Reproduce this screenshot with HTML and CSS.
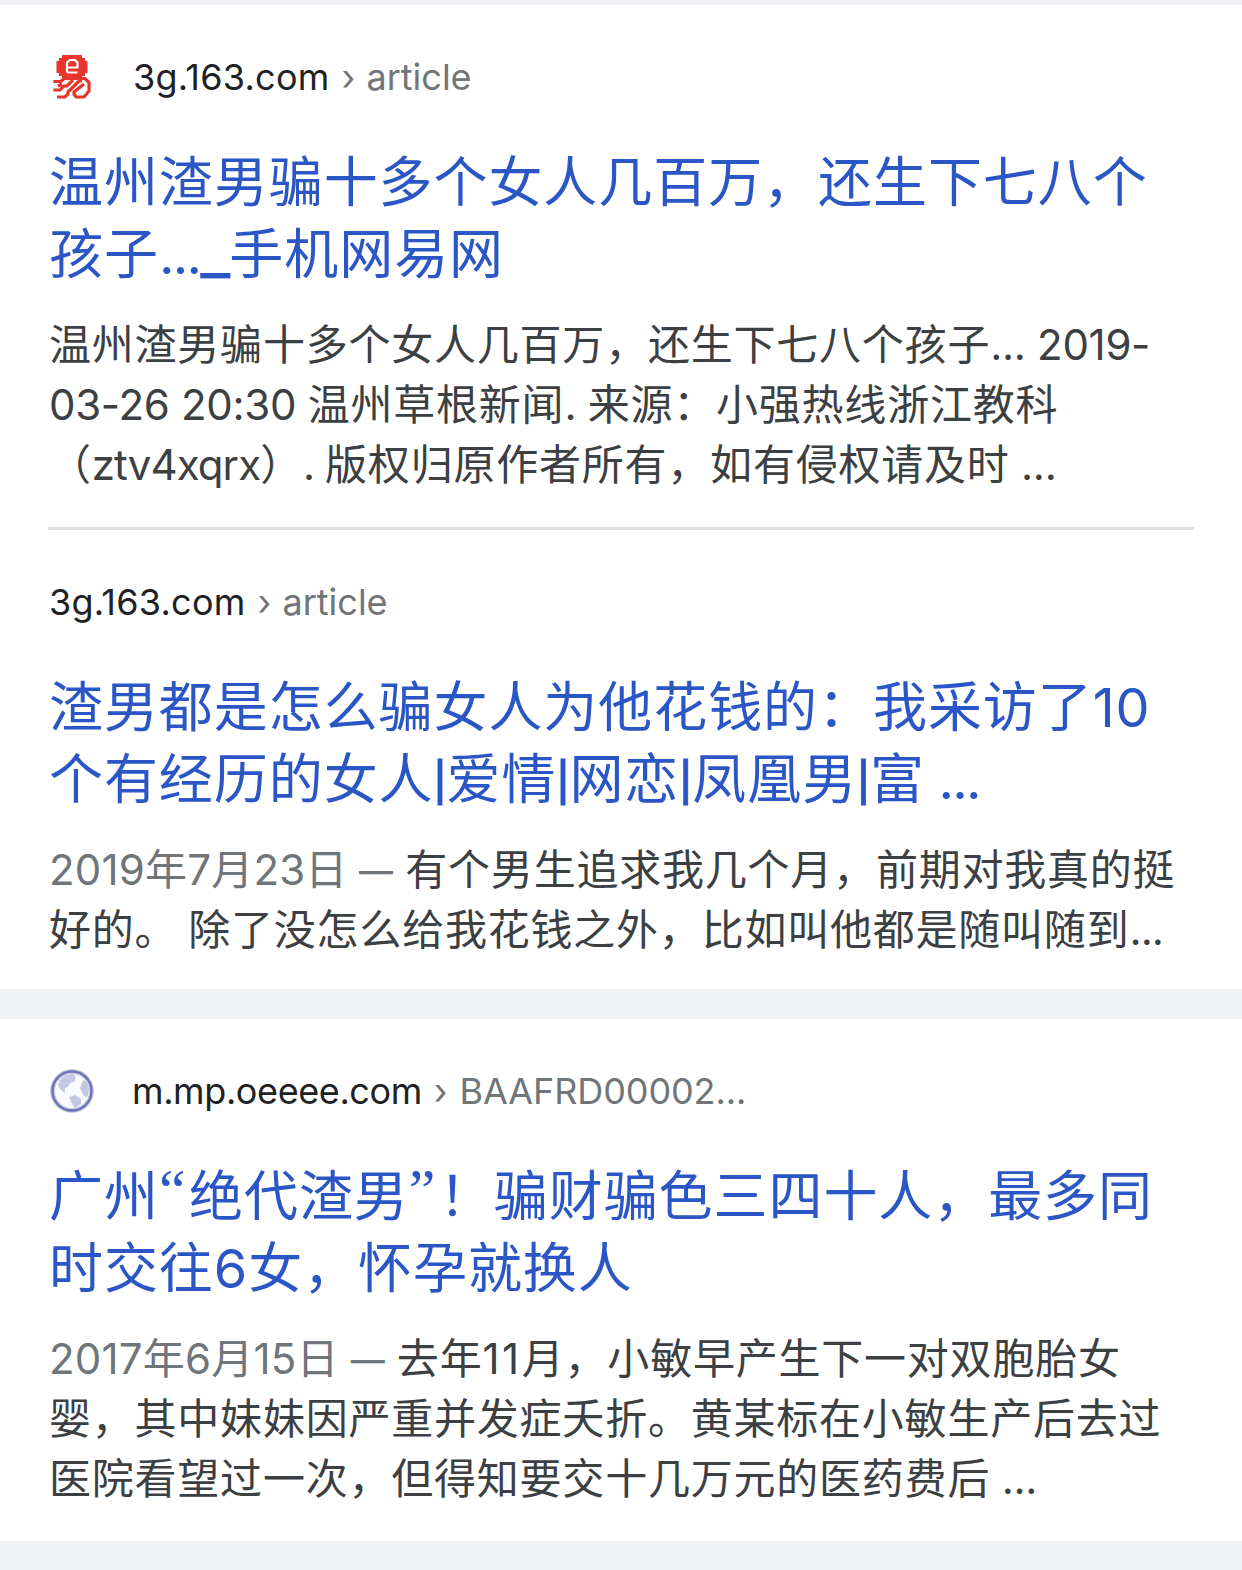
FILE: index.html
```html
<!DOCTYPE html>
<html lang="zh-CN">
<head>
    <meta charset="UTF-8">
    <meta name="viewport" content="width=device-width, initial-scale=1.0">
    <title>搜索结果</title>
    <link rel="stylesheet" href="styles.css">
</head>
<body>
    <main>
        <section class="card">
            <article class="result">
                <div class="site">
                    <svg class="favicon" viewBox="0 0 48 48">
                        <path fill="#e8352b" d="M14 2h20v3h3v3h2.500v12H37v3h-3v4H14v-4h-3v-3H8.500V8H11V5h3z"/>
                        <path fill="none" stroke="#fff" stroke-width="2.2" d="M19 19.500V9.500l3-2.500h5l2.500 2.500v5H19M19 19.500h10.500"/>
                        <g fill="none" stroke="#e8352b" stroke-width="3.2">
                            <path d="M5.300 28.500H13l3-3h12M5.300 37H12l4-4h3l6-6M9 44h8l3-3v-2l11-11h3M10 33l4-2"/>
                            <path d="M31 25.500h6l4 4V38L36 44h-8l-2-3v-2l10-8"/>
                        </g>
                    </svg>
                    <span class="domain">3g.163.com</span>
                    <span class="path">› article</span>
                </div>
                <h3 class="title">
                    <a href="#"><span class="line">温州渣男骗十多个女人几百万，还生下七八个</span>
                    <span class="line">孩子<span class="dots">...</span><span class="underscore">_</span>手机网易网</span></a>
                </h3>
                <p class="desc">
                    <span class="line">温州渣男骗十多个女人几百万，还生下七八个孩子<span class="latin">... 2019-</span></span>
                    <span class="line"><span class="latin">03-26 20:30 </span>温州草根新闻<span class="latin">. </span>来源：小强热线浙江教科</span>
                    <span class="line">（<span class="latin tight">ztv4xqrx</span>）<span class="latin tight">. </span>版权归原作者所有，如有侵权请及时<span class="latin"> ...</span></span>
                </p>
            </article>
            <article class="result">
                <div class="site">
                    <span class="domain">3g.163.com</span>
                    <span class="path">› article</span>
                </div>
                <h3 class="title">
                    <a href="#"><span class="line">渣男都是怎么骗女人为他花钱的：我采访了10</span>
                    <span class="line">个有经历的女人<span class="bar">|</span>爱情<span class="bar">|</span>网恋<span class="bar">|</span>凤凰男<span class="bar">|</span>富<span class="dots"> ...</span></span></a>
                </h3>
                <p class="desc">
                    <span class="line"><span class="date">2019年7月23日<span class="latin"> </span><span class="dash">—</span> </span>有个男生追求我几个月，前期对我真的挺</span>
                    <span class="line">好的。<span class="latin tight"> </span>除了没怎么给我花钱之外，比如叫他都是随叫随到<span class="latin tight">...</span></span>
                </p>
            </article>
        </section>

        <section class="card">
            <article class="result">
                <div class="site">
                    <svg class="favicon" viewBox="0 0 48 48">
                        <circle cx="24" cy="24" r="19.500" fill="#fafbff" stroke="#c9cce6" stroke-width="5"/>
                        <circle cx="24" cy="24" r="19.500" fill="none" stroke="#6d74b4" stroke-width="2.400"/>
                        <path fill="#c3c9e0" d="M12 13l5-5 8-1 3 3-2 5-4 1-2 4-3 1v5l-5-4-2-4zM35 13l4 2 2 7-1 7-3 1-2-3-3-6zM21 30l6-2 6 4v5l-6 4-3-4z"/>
                    </svg>
                    <span class="domain narrow">m.mp.oeeee.com</span>
                    <span class="path narrow">› BAAFRD00002...</span>
                </div>
                <h3 class="title">
                    <a href="#"><span class="line">广州<span class="quote">“</span>绝代渣男<span class="quote">”</span>！骗财骗色三四十人，最多同</span>
                    <span class="line">时交往6女，怀孕就换人</span></a>
                </h3>
                <p class="desc">
                    <span class="line"><span class="date">2017年6月15日 <span class="dash">—</span> </span>去年<span class="wide">11</span>月，小敏早产生下一对双胞胎女</span>
                    <span class="line">婴，其中妹妹因严重并发症夭折。黄某标在小敏生产后去过</span>
                    <span class="line">医院看望过一次，但得知要交十几万元的医药费后<span class="latin"> ...</span></span>
                </p>
            </article>
        </section>
    </main>
</body>
</html>
```
FILE: styles.css
```css
body {
    margin: 0;
    background-color: #f0f1f4;
    font-family: Inter, "Noto Sans CJK SC", sans-serif;
    color: #3c4043;
}
main {
    display: flex;
    flex-direction: column;
    gap: 30px;
    padding: 5px 0 28px;
}
.card {
    background-color: #fff;
    padding: 0 48px 29px;
}
.card:last-child {
    padding-bottom: 32px;
}
.result {
    padding-top: 48px;
}
.result + .result {
    margin-top: 32px;
    border-top: 3px solid #dfdfe0;
}
.site {
    display: flex;
    align-items: center;
    height: 48px;
    font-size: 36px;
    white-space: pre;
}
.favicon {
    width: 48px;
    height: 48px;
    margin-right: 36px;
}
.domain {
    color: #202124;
    margin-right: 12px;
    padding-left: 1px;
    letter-spacing: 0.25px;
}
.domain.narrow {
    padding-left: 0;
    letter-spacing: -0.4px;
}
.path {
    color: #70757a;
    word-spacing: 1px;
}
.path.narrow {
    word-spacing: 2px;
    letter-spacing: -0.1px;
}
.title {
    margin: 46px 0 0 1px;
    font-size: 54px;
    font-weight: 400;
    line-height: 72px;
    letter-spacing: 0.93px;
}
.title a {
    color: #2a56c6;
    text-decoration: none;
}
.desc {
    margin: 24px 0 0 1px;
    font-size: 42px;
    line-height: 60px;
    letter-spacing: 0.78px;
}
.line {
    display: block;
    white-space: pre;
}
.date {
    color: #70757a;
    letter-spacing: 0.2px;
}
/* punctuation and latin runs sit tighter than the chinese text */
.latin {
    letter-spacing: -0.3px;
}
.latin.tight {
    letter-spacing: -0.9px;
}
.wide {
    letter-spacing: 2.6px;
}
.dots {
    letter-spacing: -1.8px;
}
.dash {
    font-size: 34px;
    font-weight: 500;
    line-height: 0;
    vertical-align: 2px;
}
.underscore {
    font-size: 66px;
    letter-spacing: -0.9px;
    line-height: 0;
    vertical-align: 1px;
}
.bar {
    font-family: "Liberation Sans", sans-serif;
    font-size: 50px;
    letter-spacing: 0;
    line-height: 0;
    vertical-align: 4px;
    -webkit-text-stroke: 0.8px;
}
.quote {
    font-family: "Liberation Serif", serif;
    font-size: 60px;
    letter-spacing: 3.5px;
    line-height: 0;
    vertical-align: 6px;
}
```
